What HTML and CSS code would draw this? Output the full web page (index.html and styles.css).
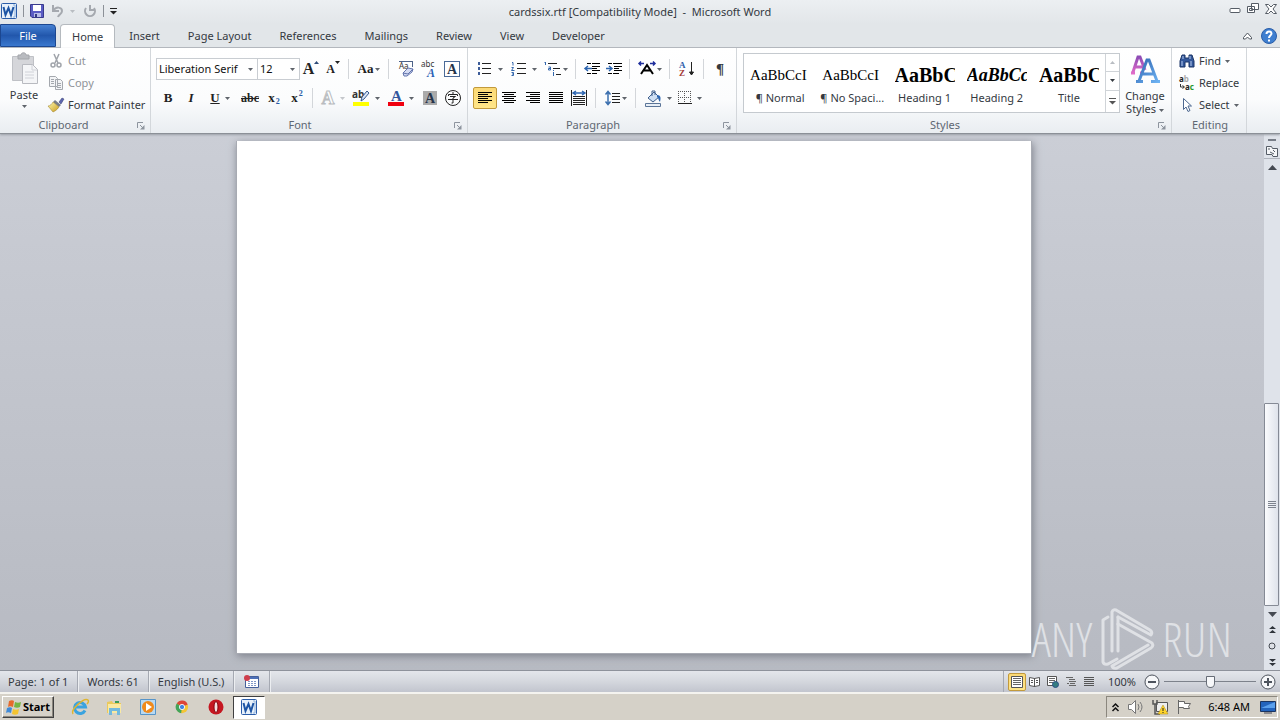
FILE: index.html
```html
<!DOCTYPE html>
<html lang="en">
<head>
<meta charset="utf-8">
<title>cardssix.rtf [Compatibility Mode] - Microsoft Word</title>
<link rel="stylesheet" href="styles.css">
</head>
<body>
<svg class="defs" aria-hidden="true">
  <defs>
    <linearGradient id="gold" x1="0" y1="0" x2="1" y2="1"><stop offset="0" stop-color="#fffbb0"/><stop offset="1" stop-color="#c89a1c"/></linearGradient>
    <linearGradient id="violet" x1="0" y1="0" x2="0" y2="1"><stop offset="0" stop-color="#8d4bb5"/><stop offset="1" stop-color="#e06cc8"/></linearGradient>
    <linearGradient id="azure" x1="0" y1="0" x2="1" y2="1"><stop offset="0" stop-color="#2d62ae"/><stop offset="1" stop-color="#6fb4f4"/></linearGradient>
  </defs>
  <symbol id="arrow" viewBox="0 0 5 3"><path d="M0 0h5L2.500 3z" fill="currentColor"/></symbol>
  <symbol id="word" viewBox="0 0 16 16"><rect x=".5" y=".5" width="15" height="15" rx="1" fill="#e8f1fa" stroke="#2a5ca8"/><path d="M12 2h2v12h-2" fill="none" stroke="#8fb2dc"/><path d="M2.500 4l2 8L7.500 5l2.500 7 2.500-8" fill="none" stroke="#1d55a5" stroke-width="2"/></symbol>
  <symbol id="launch" viewBox="0 0 8 8"><path d="M.5 6V.5H6M3 3l3 3" fill="none" stroke="#8d949e"/><path d="M7.500 3v4.500H3z" fill="#8d949e"/></symbol>
  <symbol id="lines" viewBox="0 0 16 14"><path d="M1 1.500h14M1 3.500h14M1 5.500h14M1 7.500h14M1 9.500h14M1 11.500h14" stroke="#000"/></symbol>
</svg>
<div class="app">
  <header class="titlebar">
    <div class="quick">
      <svg width="16" height="16"><use href="#word"/></svg><i class="tick"></i>
      <button aria-label="Save"><svg width="14" height="14" viewBox="0 0 14 14"><path d="M.5.5h13v13H2L.5 12z" fill="#5a5cc4" stroke="#383a8c"/><path d="M3 1h8v6H3z" fill="#fff"/><path d="M4 9h7v4H4z" fill="#b8bce8"/><path d="M5 10h2v3H5z" fill="#333a80"/></svg></button>
      <button class="undo" aria-label="Undo"><svg width="14" height="14" viewBox="0 0 14 14" fill="none" stroke="#a5a9af" stroke-width="2"><path d="M2 1v6h6M2 7c3-5 9-4 9 0 0 3-3 3-4 6"/></svg><svg class="dim" width="5" height="3"><use href="#arrow"/></svg></button>
      <button aria-label="Repeat"><svg width="14" height="14" viewBox="0 0 14 14" fill="none" stroke="#a5a9af" stroke-width="2"><path d="M3 4a5 5 0 1 0 8 0M7 1v5h5"/></svg></button><i class="tick"></i>
      <button aria-label="Customize toolbar"><svg width="7" height="7" viewBox="0 0 7 7"><path d="M0 .5h7" stroke="#222"/><path d="M0 3h7L3.500 6.500z" fill="#222"/></svg></button>
    </div>
    <h1>cardssix.rtf [Compatibility Mode] &nbsp;-&nbsp; Microsoft Word</h1>
    <div class="window-buttons">
      <button aria-label="Minimize"><svg width="12" height="12" viewBox="0 0 12 12"><rect x="1" y="5.500" width="10" height="4" rx="1" fill="#fff" stroke="#565d66"/></svg></button>
      <button aria-label="Restore"><svg width="12" height="12" viewBox="0 0 12 12" fill="#fff" stroke="#565d66"><path d="M4.500.5h7v6h-7zM.5 3.500h7v6h-7zM2.500 5.500h3v2h-3z"/></svg></button>
      <button aria-label="Close"><svg width="12" height="12" viewBox="0 0 12 12" fill="#fff" stroke="#565d66"><path d="M.5 1.500h3L6 4l2.500-2.500h3L8 6l3.500 4.500h-3L6 8l-2.500 2.500h-3L4 6z"/></svg></button>
    </div>
  </header>

  <nav class="tabs">
    <button class="file">File</button>
    <button class="tab current">Home</button>
    <button class="tab">Insert</button>
    <button class="tab">Page Layout</button>
    <button class="tab">References</button>
    <button class="tab">Mailings</button>
    <button class="tab">Review</button>
    <button class="tab">View</button>
    <button class="tab">Developer</button>
    <div class="help">
      <button aria-label="Minimize the ribbon"><svg width="9" height="8" viewBox="0 0 9 8"><path d="M.5 5.500l4-4.500 4 4.500v1.500h-2L4.500 5 2.500 7h-2z" fill="#fff" stroke="#4f565f"/></svg></button>
      <button aria-label="Help"><svg width="16" height="16" viewBox="0 0 16 16"><circle cx="8" cy="8" r="7.500" fill="#3f7fd0" stroke="#2a5ea8"/><path d="M5.500 6c0-3.500 5-3 5-.5C10.500 7.500 8 7.500 8 10M8 11.500v2" fill="none" stroke="#fff" stroke-width="2"/></svg></button>
    </div>
  </nav>

  <div class="ribbon">
    <section class="group clipboard">
      <div class="body">
        <button class="tall paste"><svg width="28" height="32" viewBox="0 0 28 32"><path d="M2.500 4.500h21v24h-21z" fill="#d5d6da" stroke="#bfc1c6"/><path d="M8 7V3h3c0-3 5-3 5 0h3v4z" fill="#b9bbc0" stroke="#a4a6ab"/><path d="M12.500 12.500h10l5 5v14h-15z" fill="#f4f5f7" stroke="#b8bac0"/><path d="M22 13v5h5M15 20h9M15 23h9M15 26h9" fill="none" stroke="#d0d2d8"/></svg><span>Paste</span><svg class="dd" width="5" height="3"><use href="#arrow"/></svg></button>
        <div class="stack">
          <button class="off"><svg width="16" height="16" viewBox="0 0 16 16" fill="none" stroke="#a0a4aa" stroke-width="1.500"><path d="M6 1l4 9M11 1l-4 9"/><circle cx="5" cy="12" r="2"/><circle cx="11" cy="12" r="2"/></svg>Cut</button>
          <button class="off"><svg width="16" height="16" viewBox="0 0 16 16" fill="#f3f4f6" stroke="#a4a8ae"><path d="M1.500 1.500h6l2 2v8h-8zM7.500 4.500h5l2 2v8h-7zM3 4.500h3M3 6.500h3M3 8.500h3M9 8.500h4M9 10.500h4M9 12.500h4"/></svg>Copy</button>
          <button><svg width="16" height="16" viewBox="0 0 16 16"><path d="M11 5l3-4 2 1-3 5z" fill="#5d66b0" stroke="#30386a" stroke-width=".5"/><path d="M7 3l6 5-2 2-6-5z" fill="#777d88"/><path d="M5 5l6 5c-2 3-4 4-6 5L0 9c2 0 4-2 5-4z" fill="url(#gold)" stroke="#987a20" stroke-width=".5"/></svg>Format Painter</button>
        </div>
      </div>
      <footer>Clipboard<button aria-label="Clipboard options"><svg width="8" height="8"><use href="#launch"/></svg></button></footer>
    </section>

    <section class="group font">
      <div class="body rows">
        <div class="row">
          <label class="combo family"><select aria-label="Font"><option>Liberation Serif</option></select><svg width="5" height="3"><use href="#arrow"/></svg></label>
          <label class="combo size"><select aria-label="Font size"><option>12</option></select><svg width="5" height="3"><use href="#arrow"/></svg></label>
          <button class="w22 letter grow" aria-label="Grow font">A<svg width="5" height="3" viewBox="0 0 5 3"><path d="M0 3h5L2.500 0z" fill="#2d4a78"/></svg></button>
          <button class="w22 letter shrink" aria-label="Shrink font">A<svg width="5" height="3"><use href="#arrow"/></svg></button><i class="sep"></i>
          <button class="w32 letter case">Aa<svg class="dd" width="5" height="3"><use href="#arrow"/></svg></button><i class="sep"></i>
          <button class="w24" aria-label="Clear formatting"><svg width="16" height="16" viewBox="0 0 16 16"><text x="1" y="8" class="micro">Aa</text><path d="M14.500 1v5M1 .5h14" stroke="#4d6288" fill="none"/><path d="M5 12l5-5 5 1-1 3-5 4H6z" fill="#d4dbf3" stroke="#6375ad"/><path d="M5 12l5 1 5-5" fill="none" stroke="#6375ad"/></svg></button>
          <button class="w22" aria-label="Phonetic guide"><svg width="16" height="20" viewBox="0 0 16 20"><text x="0" y="8" class="micro">abc</text><text x="6" y="18" class="blue-letter">A</text></svg></button>
          <button class="w24" aria-label="Character border"><svg width="16" height="16" viewBox="0 0 16 16"><rect x=".5" y=".5" width="15" height="15" fill="#fff" stroke="#4a6a98"/><text x="3" y="13" class="serif-letter">A</text></svg></button>
        </div>
        <div class="row">
          <button class="w24 letter">B</button>
          <button class="w22 letter italic">I</button>
          <button class="w36 letter"><u>U</u><svg class="dd" width="5" height="3"><use href="#arrow"/></svg></button>
          <button class="w24 letter small"><s>abc</s></button>
          <button class="w24 letter script">x<sub>2</sub></button>
          <button class="w22 letter script">x<sup>2</sup></button><i class="sep"></i>
          <button class="w32 letter ghost" aria-label="Text effects"><b>A</b><svg width="5" height="3"><use href="#arrow"/></svg></button>
          <button class="w36" aria-label="Highlight"><svg width="18" height="18" viewBox="0 0 18 18"><text x="0" y="9" class="pen">ab</text><path d="M9 12l1-4 5-6 2 2-5 6z" fill="#d7e3f5" stroke="#345a90"/><path d="M1 13h16v4H1z" fill="#ff0"/></svg><svg class="dd" width="5" height="3"><use href="#arrow"/></svg></button>
          <button class="w34" aria-label="Font color"><svg width="16" height="18" viewBox="0 0 16 18"><text x="3" y="12" class="color-letter">A</text><path d="M0 13h16v4H0z" fill="#f00010"/></svg><svg class="dd" width="5" height="3"><use href="#arrow"/></svg></button>
          <button class="w24" aria-label="Character shading"><svg width="14" height="16" viewBox="0 0 14 16"><path d="M0 1h14v14H0z" fill="#aaa"/><text x="2" y="13" class="serif-letter">A</text></svg></button>
          <button class="w22" aria-label="Enclose characters"><svg width="16" height="16" viewBox="0 0 16 16" fill="none" stroke="#222"><circle cx="8" cy="8" r="7.500"/><path d="M8 2v2M3.500 6V4.500h9V6M5 6.500h5.500L8 8v5H6.500M3 9.500h10"/></svg></button>
        </div>
      </div>
      <footer>Font<button aria-label="Font options"><svg width="8" height="8"><use href="#launch"/></svg></button></footer>
    </section>

    <section class="group paragraph">
      <div class="body rows">
        <div class="row">
          <button class="w34" aria-label="Bullets"><svg width="16" height="16" viewBox="0 0 16 16"><path d="M1 1h2v3H1zM1 6h2v3H1zM1 11h2v3H1z" fill="#3d5c99"/><path d="M5 2.500h9M5 7.500h9M5 12.500h9" stroke="#222"/></svg><svg class="dd" width="5" height="3"><use href="#arrow"/></svg></button>
          <button class="w34" aria-label="Numbering"><svg width="16" height="16" viewBox="0 0 16 16"><path d="M1 1.500h1v3M.5 6.500h2l-2 3h3M.5 11.500h2v3h-2M1 13h1" fill="none" stroke="#3266ad"/><path d="M6 2.500h9M6 7.500h9M6 12.500h9" stroke="#222"/></svg><svg class="dd" width="5" height="3"><use href="#arrow"/></svg></button>
          <button class="w32 close" aria-label="Multilevel list"><svg width="18" height="16" viewBox="0 0 18 16"><path d="M1.500 1v3M.5 1.500h1M4.500 6h2v3h-2V7.500h2M9.500 11v4M9.500 9v1" fill="none" stroke="#3266ad"/><path d="M4 2.500h9M9 7.500h7M12 13.500h5" stroke="#222"/></svg><svg class="dd" width="5" height="3"><use href="#arrow"/></svg></button><i class="sep"></i>
          <button class="w22" aria-label="Decrease indent"><svg width="16" height="14" viewBox="0 0 16 14"><path d="M3 1.500h4M8 1.500h8M8 4.500h8M8 6.500h5M8 8.500h8M3 11.500h4M8 11.500h5" stroke="#000"/><path d="M8 6.500H1M4 4L1 6.500 4 9" fill="none" stroke="#2d65b0" stroke-width="1.500"/></svg></button>
          <button class="w22" aria-label="Increase indent"><svg width="16" height="14" viewBox="0 0 16 14"><path d="M2 1.500h4M7 1.500h9M8 4.500h8M8 6.500h5M8 8.500h8M2 11.500h4M7 11.500h6" stroke="#000"/><path d="M0 6.500h6M3 4l3 2.500L3 9" fill="none" stroke="#2d65b0" stroke-width="1.500"/></svg></button><i class="sep"></i>
          <button class="w32 close" aria-label="Asian layout"><svg width="18" height="16" viewBox="0 0 18 16"><path d="M3 13l6-9 6 9M6 9.500h6" fill="none" stroke="#000" stroke-width="2"/><path d="M1 2.500h5M3 .5L1 2.500l2 2M12 2.500h5M15 .5l2 2-2 2" fill="none" stroke="#1e2e9c" stroke-width="1.500"/></svg><svg class="dd" width="5" height="3"><use href="#arrow"/></svg></button><i class="sep"></i>
          <button class="w24" aria-label="Sort"><svg width="16" height="18" viewBox="0 0 16 18"><text x="0" y="8" class="sort-a">A</text><text x="0" y="16" class="sort-z">Z</text><path d="M12.500 2v12M10.500 12l2 3 2-3z" fill="#222" stroke="#222"/></svg></button><i class="sep"></i>
          <button class="w22 pilcrow" aria-label="Show marks">¶</button>
        </div>
        <div class="row">
          <button class="w24 active" aria-label="Align left"><svg width="16" height="14" viewBox="0 0 16 14"><path d="M1 1.500h14M1 3.500h10M1 5.500h14M1 7.500h10M1 9.500h14M1 11.500h10" stroke="#000"/></svg></button>
          <button class="w24" aria-label="Center"><svg width="16" height="14" viewBox="0 0 16 14"><path d="M1 1.500h14M3 3.500h10M1 5.500h14M3 7.500h10M1 9.500h14M3 11.500h10" stroke="#000"/></svg></button>
          <button class="w24" aria-label="Align right"><svg width="16" height="14" viewBox="0 0 16 14"><path d="M1 1.500h14M5 3.500h10M1 5.500h14M5 7.500h10M1 9.500h14M5 11.500h10" stroke="#000"/></svg></button>
          <button class="w22" aria-label="Justify"><svg width="16" height="14"><use href="#lines"/></svg></button>
          <button class="w24" aria-label="Distributed"><svg width="16" height="16" viewBox="0 0 16 16"><path d="M.5 0v16M15.500 0v16M2 6.500h12M2 8.500h12M2 10.500h12M2 12.500h12M2 14.500h12" stroke="#222"/><path d="M2 3h12M5 1L2 3l3 2M11 1l3 2-3 2" fill="none" stroke="#2d65b0" stroke-width="1.500"/></svg></button><i class="sep"></i>
          <button class="w32 close" aria-label="Line spacing"><svg width="16" height="16" viewBox="0 0 16 16"><path d="M3 2v12M.5 4.500L3 1.500l2.500 3M.5 11.500L3 14.500l2.500-3" fill="none" stroke="#3b6fae" stroke-width="1.500"/><path d="M7 3.500h8M7 6.500h8M7 9.500h8M7 12.500h8" stroke="#222"/></svg><svg class="dd" width="5" height="3"><use href="#arrow"/></svg></button><i class="sep"></i>
          <button class="w34" aria-label="Shading"><svg width="17" height="17" viewBox="0 0 17 17"><path d="M3 8l6-6 5 5-6 5z" fill="#cfe0f4" stroke="#3f5f8c"/><path d="M7 6V1h3v4" fill="none" stroke="#3f5f8c"/><path d="M12 5c4 0 4 3 3 7-2-2-1-4-3-5z" fill="#2d65b0"/><path d="M.5 13.500h15v3H.5z" fill="#e8eff7" stroke="#5b7598"/></svg><svg class="dd" width="5" height="3"><use href="#arrow"/></svg></button>
          <button class="w32" aria-label="Borders"><svg width="14" height="14" viewBox="0 0 14 14"><path d="M.5 0v13M6.500 0v13M12.500 0v13M0 .5h13M0 6.500h13" stroke="#555" stroke-dasharray="1 1"/><path d="M0 12.500h14" stroke="#222"/></svg><svg class="dd" width="5" height="3"><use href="#arrow"/></svg></button>
        </div>
      </div>
      <footer>Paragraph<button aria-label="Paragraph options"><svg width="8" height="8"><use href="#launch"/></svg></button></footer>
    </section>

    <section class="group styles">
      <div class="body">
        <div class="gallery">
          <button class="style"><span class="sample">AaBbCcI</span><span>¶ Normal</span></button>
          <button class="style"><span class="sample">AaBbCcI</span><span>¶ No Spaci...</span></button>
          <button class="style"><span class="sample heavy">AaBbC</span><span>Heading 1</span></button>
          <button class="style"><span class="sample heavy slanted">AaBbCc</span><span>Heading 2</span></button>
          <button class="style"><span class="sample heavy">AaBbC</span><span>Title</span></button>
          <div class="gallery-scroll">
            <button class="dim" aria-label="Previous styles"><svg width="5" height="3" viewBox="0 0 5 3"><path d="M0 3h5L2.500 0z" fill="currentColor"/></svg></button>
            <button aria-label="Next styles"><svg width="5" height="3"><use href="#arrow"/></svg></button>
            <button aria-label="More styles"><svg width="7" height="7" viewBox="0 0 7 7"><path d="M0 .5h7" stroke="#555"/><path d="M0 3h7L3.500 6.500z" fill="#555"/></svg></button>
          </div>
        </div>
        <button class="tall change"><svg width="30" height="28" viewBox="0 0 30 28"><path d="M1 18h4M10 18h4M3 17L8 2h2l5 13M5 12h8" fill="none" stroke="url(#violet)" stroke-width="3"/><path d="M9 26l8-21h2l8 21M12 19h12M6 26.500h7M21 26.500h9" fill="none" stroke="url(#azure)" stroke-width="3"/></svg><span>Change<br>Styles <svg class="dd" width="5" height="3"><use href="#arrow"/></svg></span></button>
      </div>
      <footer>Styles<button aria-label="Style options"><svg width="8" height="8"><use href="#launch"/></svg></button></footer>
    </section>

    <section class="group editing">
      <div class="body">
        <div class="stack">
          <button><svg width="16" height="16" viewBox="0 0 16 16"><path d="M3 2h3v3h4V2h3l2 6v6h-5v-5H6v5H1V8z" fill="#33579a" stroke="#1d3768"/><path d="M3 8v5M12 8v5M4 3v3M11 3v3" stroke="#b8cdf0"/></svg>Find<svg class="dd" width="5" height="3"><use href="#arrow"/></svg></button>
          <button><svg width="16" height="20" viewBox="0 0 16 20"><text x="0" y="9" class="rep-a">a<tspan class="rep-b">b</tspan></text><text x="6" y="17" class="rep-a">a<tspan class="rep-c">c</tspan></text><path d="M1.500 11v3H5M3.500 12.500l2 1.500-2 1.500" fill="none" stroke="#333"/></svg>Replace</button>
          <button><svg width="16" height="16" viewBox="0 0 16 16"><path d="M4.500 1.500v11L7 10l2 4.500 2-1L9 9h3.500z" fill="#fff" stroke="#4d6890"/></svg>Select<svg class="dd" width="5" height="3"><use href="#arrow"/></svg></button>
        </div>
      </div>
      <footer>Editing</footer>
    </section>
  </div>

  <main class="workspace">
    <div class="canvas">
      <div class="paper"></div>
      <div class="watermark"><span>ANY</span><svg width="56" height="62" viewBox="0 0 56 62" fill="none" stroke="currentColor" stroke-width="3" stroke-linejoin="round" stroke-linecap="round"><path d="M9 9L4 12v42q1 3 5 2l9-5"/><path d="M13 43V4q1-3 4-2l34 20q3 2 1 5L19 9"/><path d="M19 9v34"/><path d="M19 16l34 19q2 3-1 5L18 60q-4 1-5-2l36-21"/></svg><span>RUN</span></div>
    </div>
    <div class="scroll">
      <i class="split"></i>
      <button class="ruler" aria-label="View ruler"><svg width="12" height="12" viewBox="0 0 12 12" fill="#f5f6f8" stroke="#555c66"><path d="M.5 1.500h5l1 2h5v8H7l-1-2H.5zM2 4h2M4 7l4 2M7 5l2 2"/></svg></button>
      <button class="step" aria-label="Scroll up"><svg width="9" height="5" viewBox="0 0 9 5"><path d="M0 5h9L4.500 0z" fill="#454a52"/></svg></button>
      <div class="track"><div class="thumb"><svg width="8" height="8" viewBox="0 0 8 8"><path d="M0 .5h8M0 2.500h8M0 4.500h8M0 6.500h8" stroke="#7d838e"/></svg></div></div>
      <button class="step" aria-label="Scroll down"><svg width="9" height="5" viewBox="0 0 9 5"><path d="M0 0h9L4.500 5z" fill="#454a52"/></svg></button>
      <button class="step" aria-label="Previous page"><svg width="7" height="8" viewBox="0 0 7 8"><path d="M3.500 0L7 3H0zM3.500 4L7 7H0z" fill="#30353c"/></svg></button>
      <button class="step" aria-label="Browse object"><svg width="8" height="8" viewBox="0 0 8 8"><circle cx="4" cy="4" r="3" fill="#dde0e6" stroke="#454a52"/></svg></button>
      <button class="step" aria-label="Next page"><svg width="7" height="8" viewBox="0 0 7 8"><path d="M3.500 4L7 1H0zM3.500 8L7 5H0z" fill="#30353c"/></svg></button>
    </div>
  </main>

  <div class="status">
    <button>Page: 1 of 1</button><button>Words: 61</button><button>English (U.S.)</button>
    <button class="macro" aria-label="Macro recording"><svg width="16" height="14" viewBox="0 0 16 14"><path d="M1.500 1.500h13v11h-13z" fill="#fff" stroke="#45609a"/><path d="M2 2h12v2H2z" fill="#4d70b8"/><path d="M4 6.500h9M4 8.500h9M4 10.500h9" stroke="#8198c8" stroke-dasharray="2 1"/><circle cx="3" cy="3" r="3" fill="#cf3e4c"/></svg></button>
    <div class="views">
      <button class="active" aria-label="Print layout"><svg width="14" height="12" viewBox="0 0 14 12"><path d="M1.500.5h11v11h-11z" fill="#fff" stroke="#555"/><path d="M3 2.500h8M3 4.500h8M3 6.500h8M3 8.500h8" stroke="#666"/></svg></button>
      <button aria-label="Full screen reading"><svg width="12" height="12" viewBox="0 0 12 12" fill="#fff" stroke="#555"><path d="M.5 1.500l5 1 5-1v8l-5 1-5-1zM5.500 2v9M2 4.500h2M2 6.500h2M7 4.500h2M7 6.500h2"/></svg></button>
      <button aria-label="Web layout"><svg width="12" height="12" viewBox="0 0 12 12"><path d="M.5.5h9v9h-9z" fill="#fff" stroke="#555"/><path d="M2 2.500h6M2 4.500h6M2 6.500h4" stroke="#666"/><circle cx="8.500" cy="8.500" r="3" fill="#347d80" stroke="#2b4f85"/></svg></button>
      <button aria-label="Outline"><svg width="12" height="12" viewBox="0 0 12 12"><path d="M1 1.500h7M4 3.500h6M4 5.500h7M2 7.500h2M5 7.500h5M4 9.500h7" stroke="#666"/></svg></button>
      <button aria-label="Draft"><svg width="12" height="12" viewBox="0 0 12 12"><path d="M1 1.500h10M1 3.500h10M1 5.500h10M1 7.500h10M1 9.500h10" stroke="#555"/></svg></button>
      <button class="percent">100%</button>
      <button class="zoom-step" aria-label="Zoom out"><svg width="16" height="16" viewBox="0 0 16 16" fill="#f6f7f9" stroke="#4d535d"><circle cx="8" cy="8" r="7"/><path d="M4 8h8" stroke-width="2"/></svg></button>
      <input type="range" aria-label="Zoom" min="0" max="100" value="50">
      <button class="zoom-step" aria-label="Zoom in"><svg width="16" height="16" viewBox="0 0 16 16" fill="#f6f7f9" stroke="#4d535d"><circle cx="8" cy="8" r="7"/><path d="M4 8h8M8 4v8" stroke-width="2"/></svg></button>
    </div>
  </div>

  <div class="taskbar">
    <button class="start"><svg width="17" height="16" viewBox="0 0 17 16"><path d="M3 2c2-1 4-1 5 0L7 8c-2-1-4-1-5 0z" fill="#e66a2c"/><path d="M9 3c2 1 4 1 6 0l-1 5c-2 1-4 1-6 0z" fill="#75b544"/><path d="M1 9c2-1 4-1 5 0l-1 5c-2-1-4-1-5 0z" fill="#3f8ad8"/><path d="M7 10c2 1 4 1 6 0l-1 5c-2 1-4 1-6 0z" fill="#f4c430"/></svg>Start</button>
    <div class="pins">
      <button aria-label="Internet Explorer"><svg width="18" height="18" viewBox="0 0 18 18" fill="none"><path d="M14 12.500A5.500 5.500 0 1 1 14.500 9H4" stroke="#3aa3df" stroke-width="3"/><path d="M2 16C-1 12 13-1 17 2c1 1 0 3-1 4" stroke="#dfb52f" stroke-width="1.500"/></svg></button>
      <button aria-label="File Explorer"><svg width="17" height="17" viewBox="0 0 17 17"><path d="M1 3l5-1 1 2h8v10H1z" fill="#eac95c"/><path d="M2 5h13v9H2z" fill="#fae9a1"/><path d="M3 16V9h11v7h-3v-4H6v4z" fill="#73b9dd"/><path d="M9 3h4" stroke="#3a9b58" stroke-width="2"/></svg></button>
      <button aria-label="Media Player"><svg width="16" height="16" viewBox="0 0 16 16"><path d="M.5.5h15v15H.5z" fill="#b8d9f2" stroke="#5694c8"/><circle cx="8" cy="8" r="6" fill="#f08a1c"/><path d="M6 4l6 4-6 4z" fill="#fff"/></svg></button>
      <button aria-label="Chrome"><svg width="14" height="14" viewBox="0 0 16 16"><circle cx="8" cy="8" r="7" fill="#f4c536"/><path d="M8 8L2 4a7 7 0 0 1 12.500 1z" fill="#dd4538"/><path d="M8 8L2 4a7 7 0 0 0 5 11z" fill="#42a45a"/><circle cx="8" cy="8" r="3" fill="#4184e0" stroke="#fff"/></svg></button>
      <button aria-label="Opera"><svg width="16" height="16" viewBox="0 0 16 16"><circle cx="8" cy="8" r="7.500" fill="#c51620"/><ellipse cx="8" cy="8" rx="2" ry="5.500" fill="#f4dede" stroke="#86000b"/></svg></button>
      <button class="running" aria-label="Word"><svg width="16" height="16"><use href="#word"/></svg></button>
    </div>
    <div class="tray">
      <button aria-label="Show hidden icons"><svg width="7" height="9" viewBox="0 0 7 9"><path d="M.5 4l3-3 3 3M.5 8l3-3 3 3" fill="none" stroke="#111" stroke-width="1.500"/></svg></button>
      <svg width="17" height="16" viewBox="0 0 17 16" fill="#fff" stroke="#777"><path d="M1.500 5.500h3l4-4v13l-4-4h-3z"/><path d="M11 5q2 3 0 6M13 3q4 5 0 10" fill="none"/></svg>
      <svg width="16" height="16" viewBox="0 0 16 16"><path d="M4.500 3.500h11v9h-11z" fill="#eee" stroke="#555"/><path d="M1 1v4h4V1M3 5v10h5" fill="none" stroke="#555" stroke-width="1.500"/><path d="M11 6l5 9H6z" fill="#ffd52b" stroke="#a98712" stroke-width=".5"/><path d="M11 9v3M11 13v1" stroke="#222"/></svg>
      <svg width="16" height="16" viewBox="0 0 16 16" fill="#fff" stroke="#666"><path d="M2.500 1v14M2.500 2.500h6v2h6l-2 3 1 2h-6v-1h-5z"/></svg>
      <time>6:48 AM</time>
      <svg width="16" height="14" viewBox="0 0 16 14"><path d="M.5 1.500h15v10H.5z" fill="#2364bd" stroke="#1c3560"/><path d="M1 8l14-6v6z" fill="#5ba0ec"/><path d="M4 13h8" stroke="#445"/></svg>
    </div>
  </div>
</div>
</body>
</html>
```
FILE: styles.css
```css
* { box-sizing: border-box; }
body { margin: 0; font: 11px/16px "Noto Sans", "Open Sans", sans-serif; color: #34393f; }
button, select, input { margin: 0; padding: 0; border: 0; background: none; font: inherit; color: inherit; }
button { display: flex; align-items: center; justify-content: center; white-space: nowrap; }
svg { flex: none; display: block; overflow: visible; }
.defs { position: absolute; width: 0; height: 0; }
.app { min-height: 100vh; display: flex; flex-direction: column; background: #e2e6ea; }
.dd { color: #5f646b; }
.dim { color: #b9bdc2; }

.titlebar { display: grid; grid-template-columns: 1fr auto 1fr; height: 24px; background: linear-gradient(#eceff2, #e2e6e9); }
.titlebar h1 { margin: 0; font-size: 11px; font-weight: 400; line-height: 24px; }
.quick { display: flex; align-items: center; gap: 6px; padding: 0 0 2px 1px; }
.tick { width: 1px; height: 12px; background: #8c9198; }
.undo { gap: 5px; margin: 0 2px 0 1px; }
.window-buttons { display: flex; justify-content: flex-end; gap: 6px; padding: 3px 3px; align-items: flex-start; }

.tabs { display: flex; height: 24px; border-bottom: 1px solid #b5babf; background: #e2e6e9; }
.tab { padding: 0 14px; }
.file { width: 56px; margin-right: 4px; border: 1px solid #1c4790; border-radius: 0 4px 0 0; background: linear-gradient(#4580d2, #2257ac 50%, #3a78ce); color: #fff; }
.tab.current { height: 24px; padding: 0 11px; border: 1px solid #b5babf; border-bottom: 0; border-radius: 4px 4px 0 0; background: #fff; }
.help { display: flex; gap: 9px; margin-left: auto; padding-right: 3px; }

.ribbon { display: flex; height: 86px; border-bottom: 1px solid #8b9097; background: linear-gradient(#fff, #fbfcfd 60%, #e9edf1); box-shadow: 0 1px 2px #9ba0a8; position: relative; }
.group { display: flex; flex-direction: column; border-right: 1px solid #d3d7db; padding: 0 3px 0 5px; }
.body { display: flex; flex: 1; }
.group footer { display: flex; justify-content: center; position: relative; height: 16px; line-height: 16px; padding-right: 20px; color: #5e6772; }
.group footer button { position: absolute; right: 2px; top: 5px; }
.clipboard { width: 151px; padding-left: 0; }
.font { width: 317px; }
.paragraph { width: 269px; }
.styles { width: 435px; }
.editing { width: 75px; }
.group.editing footer { padding-right: 0; }
.tall { flex-direction: column; justify-content: flex-start; line-height: 13px; }
.paste { width: 48px; padding-top: 4px; gap: 4px; }
.stack { display: flex; flex-direction: column; padding-top: 2px; }
.stack button { height: 22px; gap: 4px; justify-content: flex-start; }
.editing .stack { padding-left: 2px; }
.off { color: #8f9398; }
.rows { flex-direction: column; padding-top: 10px; gap: 7px; }
.row { display: flex; height: 22px; align-items: center; }
.row button { height: 22px; gap: 5px; }
.row .close { gap: 1px; }
.w22 { width: 22px; }
.w24 { width: 24px; }
.w32 { width: 30px; }
.w34 { width: 34px; }
.w36 { width: 36px; }
.sep { width: 1px; height: 20px; margin: 0 5px 0 4px; background: #d3d6da; }
.active { border: 1px solid #c29a3c; border-radius: 2px; background: linear-gradient(#fbd975, #ffe68a); }
.combo { display: grid; align-items: center; justify-items: end; height: 22px; border: 1px solid #c9cdd2; background: #fff; color: #5f646b; }
.combo > * { grid-area: 1 / 1; }
.combo svg { margin-right: 4px; pointer-events: none; }
.combo select { appearance: none; width: 100%; padding-left: 2px; color: #111; }
.family { width: 102px; }
.size { width: 43px; margin-left: -1px; }
.letter { font: bold 13px/16px "Liberation Serif", serif; color: #222; }
.row .grow, .row .shrink { gap: 0; }
.grow { font-size: 16px; }
.grow svg, .shrink svg { align-self: flex-start; margin-top: 3px; }
.shrink { font-size: 12px; }
.row .case { gap: 2px; }
.italic { font-style: italic; }
.small { font-size: 12px; }
.letter sub, .letter sup { font-size: 8px; line-height: 8px; color: #2559a5; }
.row .script { gap: 1px; }
.letter sub { align-self: flex-end; margin-bottom: 3px; }
.letter sup { align-self: flex-start; margin-top: 3px; }
.ghost { color: #c4c7cb; }
.ghost b { font-size: 18px; color: #fff; -webkit-text-stroke: 1px #b9bcc0; }
.pilcrow { font: bold 15px/16px "Liberation Serif", serif; }
.micro { font: 8px "Noto Sans", sans-serif; fill: #333; }
.pen { font: bold 10px "Noto Sans", sans-serif; fill: #333; }
.serif-letter { font: bold 14px "Liberation Serif", serif; fill: #26344a; }
.blue-letter { font: italic bold 12px "Liberation Serif", serif; fill: #2860b5; }
.color-letter { font: bold 15px "Liberation Serif", serif; fill: #31569c; }
.sort-a, .sort-z { font: bold 9px "Liberation Serif", serif; fill: #2d5eab; }
.sort-z { fill: #a33a36; }
.rep-a { font: bold 8px "Noto Sans", sans-serif; fill: #222; }
.rep-b { fill: #aaa; }
.rep-c { fill: #25982d; }

.gallery { display: flex; width: 377px; height: 60px; margin: 5px 0 0 1px; border: 1px solid #c5cacf; background: #fff; }
.style { flex: 1; min-width: 0; flex-direction: column; gap: 6px; padding-top: 5px; }
.sample { width: 60px; overflow: hidden; font: 15px/18px "Liberation Serif", serif; color: #000; text-align: left; }
.heavy { font-size: 20px; font-weight: bold; }
.slanted { font-size: 18px; font-style: italic; }
.gallery-scroll { display: grid; width: 14px; border-left: 1px solid #d0d4d8; }
.gallery-scroll button + button { border-top: 1px solid #d0d4d8; }
.change { width: 50px; padding-top: 7px; gap: 6px; }
.change .dd { display: inline-block; vertical-align: middle; }
.styles .body { margin-right: -3px; }

.workspace { display: flex; flex: 1; background: linear-gradient(#cbced6, #b7bac2); }
.canvas { display: flex; flex: 1; justify-content: center; position: relative; padding: 7px 0 16px 4px; overflow: hidden; }
.paper { width: 796px; background: #fff; border: 1px solid #a7aab2; border-top: 0; box-shadow: 1px 2px 8px #7d818b; }
.watermark { position: absolute; right: 32px; bottom: 0; display: flex; align-items: center; gap: 7px; color: #dfe1e5; font: 300 48px/60px "Open Sans Condensed Light", "Liberation Sans Narrow", sans-serif; }
.scroll { display: flex; flex-direction: column; width: 16px; background: #dfe3ea; }
.split { height: 2px; margin: 5px 4px 2px; background: #777d87; }
.ruler { height: 16px; border-bottom: 1px solid #b0b4bd; }
.step { height: 16px; }
.track { flex: 1; display: flex; flex-direction: column; justify-content: flex-end; }
.thumb { display: grid; place-items: center; height: 47%; border: 1px solid #858a95; border-radius: 1px; background: linear-gradient(90deg, #fafbfd, #dfe3eb); margin-right: 1px; }

.status { display: flex; height: 24px; border-top: 1px solid #8e929b; border-bottom: 2px solid #f4f3ef; background: linear-gradient(#e4e6eb, #d6d9df 45%, #c2c5ce); }
.status > button { padding: 0 9px; border-right: 1px solid #a5a9b2; box-shadow: 1px 0 #eceef1; }
.status > button:first-child { padding-left: 8px; }
.status > .macro { padding: 0 9px 0 10px; }
.views { display: flex; align-items: center; margin-left: auto; padding-left: 4px; border-left: 1px solid #a5a9b2; }
.views button { width: 18px; height: 18px; }
.views .percent { width: 42px; padding-right: 4px; justify-content: flex-end; }
.views .zoom-step { width: 24px; }
.views input { width: 92px; appearance: none; height: 16px; background: linear-gradient(#7d828b, #7d828b) center / 100% 1px no-repeat; }
.views input::-webkit-slider-thumb { appearance: none; width: 9px; height: 12px; border: 1px solid #666c76; border-radius: 1px 1px 5px 5px; background: #f7f8fa; }

.taskbar { display: flex; align-items: center; height: 26px; padding: 1px 2px; background: #d5d1c8; }
.start { width: 52px; height: 22px; border: 1px solid; border-color: #fff #404040 #404040 #fff; box-shadow: inset -1px -1px #8b877e; color: #000; font-size: 11px; font-weight: 700; }
.pins { display: flex; margin-left: 9px; }
.pins button { width: 34px; height: 23px; }
.pins .running { width: 32px; border: 1px solid; border-color: #404040 #fff #fff #404040; background: #fff; }
.tray { display: flex; align-items: center; gap: 8px; height: 22px; margin-left: auto; padding: 0 1px 0 5px; border: 1px solid; border-color: #8b877e #fff #fff #8b877e; color: #000; }
.tray time { margin: 0 2px 0 8px; }
```
